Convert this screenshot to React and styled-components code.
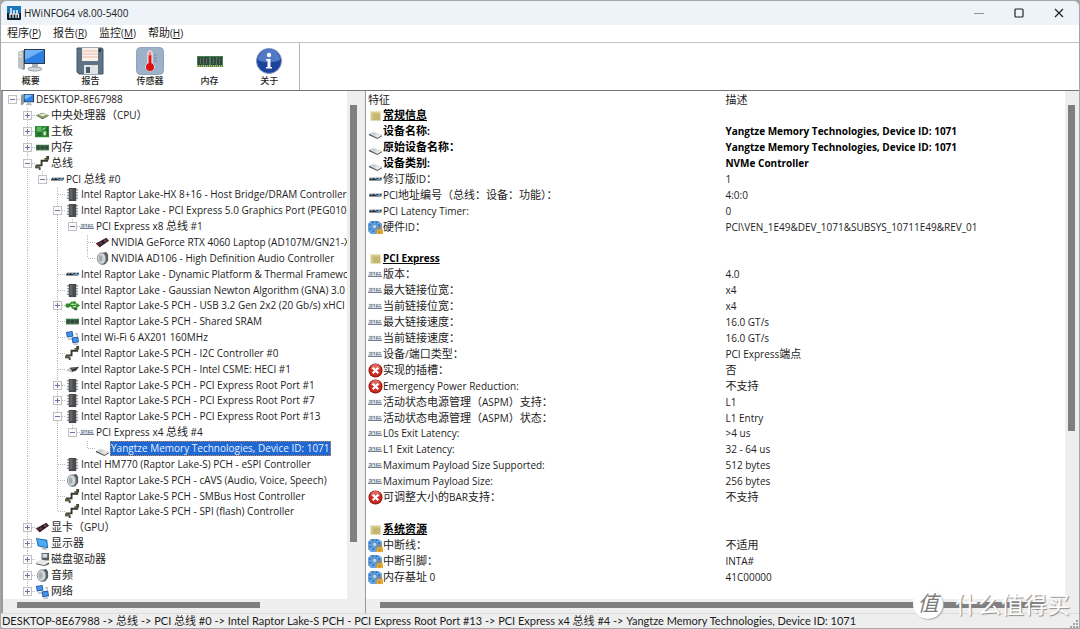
import React, { useState } from "react";
import styled, { createGlobalStyle } from "styled-components";

const GlobalStyle = createGlobalStyle`
  * {
    box-sizing: border-box;
  }
  body {
    margin: 0;
    background-color: #a8a8a8;
  }
  body, button {
    font-family: "Open Sans", "Noto Sans CJK SC", sans-serif;
    font-size: 10px;
    color: #1c1c1c;
  }
  button {
    border: none;
    background: none;
    padding: 0;
  }
`;

const Window = styled.div`
  height: 100vh;
  display: flex;
  flex-direction: column;
  position: relative;
  overflow: hidden;
  background-color: #eeeeee;
  border: 1px solid #a3a7aa;
  border-radius: 7px 7px 3px 3px;
`;

const TitleBar = styled.header`
  display: flex;
  align-items: center;
  flex: 0 0 24px;
  padding-left: 6px;
  background-color: #edf3f9;
`;
const Title = styled.h1`
  flex: 1;
  margin: 0 0 0 3px;
  font-size: 10px;
  font-weight: 400;
`;
const WindowButton = styled.button`
  width: 40px;
  height: 24px;
  display: flex;
  align-items: center;
  justify-content: center;
`;

const MenuBar = styled.nav`
  display: flex;
  align-items: center;
  flex: 0 0 18px;
  gap: 12px;
  padding-left: 6px;
  background-color: #fff;
  border-bottom: 1px solid #c2c2c2;
  button {
    line-height: 15px;
  }
`;

const ToolBar = styled.div`
  display: flex;
  flex: 0 0 48px;
  background-color: #fff;
  border-bottom: 1px solid #767676;
`;
const ToolGroup = styled.div`
  display: flex;
  width: 299px;
  border-right: 1px solid #b4b4b4;
`;
const ToolButton = styled.button`
  flex: 1;
  display: flex;
  flex-direction: column;
  align-items: center;
  justify-content: space-between;
  padding: 4px 0 3px;
  font-size: 9px;
  font-weight: 500;
  line-height: 12px;
`;

const Main = styled.main`
  flex: 1;
  min-height: 0;
  display: flex;
  gap: 4px;
`;
const Pane = styled.section`
  display: grid;
  grid-template-columns: minmax(0, 1fr) 14px;
  grid-template-rows: minmax(0, 1fr) 14px;
  min-width: 0;
  flex: ${(props) => (props.$grow ? "1 1 0" : "0 1 360px")};
  border-left: ${(props) => (props.$grow ? "1px" : "2px")} solid #9a9a9a;
`;
const VerticalTrack = styled.div`
  padding: 14px 4px 14px 3px;
`;
const HorizontalTrack = styled.div`
  padding: 3px 14px 5px;
`;
const Thumb = styled.div`
  width: ${(props) => props.$width || "100%"};
  height: ${(props) => props.$height || "100%"};
  background-color: #7f7f7f;
`;

const Hanzi = styled.span`
  font-size: 11px;
  line-height: 11px;
`;

const TreeList = styled.ul`
  display: grid;
  grid-auto-rows: minmax(15px, 1fr);
  margin: 0;
  padding: 1px 0 0 2px;
  overflow: hidden;
  list-style: none;
  background-color: #fff;
`;
const TreeItem = styled.li`
  display: flex;
  align-items: stretch;
  min-width: 0;
  white-space: nowrap;
`;
const dots = "#b9b9b9 0 1px, transparent 1px 2px";
const Guide = styled.span`
  flex: 0 0 15px;
  display: flex;
  align-items: center;
  justify-content: center;
  background-repeat: no-repeat;
  background-image:
    repeating-linear-gradient(to bottom, ${dots}),
    repeating-linear-gradient(to right, ${dots});
  background-position: 7px 0, 8px 50%;
  background-size:
    ${(props) => ({ none: "0 0", last: "1px 50%" }[props.$line] || "1px 100%")},
    ${(props) => (props.$arm ? "7px 1px" : "0 0")};
`;
const Toggle = styled.button`
  width: 9px;
  height: 9px;
  display: flex;
  background-color: #fff;
`;
const TreeIcon = styled.span`
  flex: 0 0 15px;
  display: flex;
  align-items: center;
`;
const TreeLabel = styled.span`
  align-self: center;
  margin-left: ${(props) => (props.$selected ? "0" : "1px")};
  padding: ${(props) => (props.$selected ? "0 1px" : "0")};
  line-height: 15px;
  color: ${(props) => (props.$selected ? "#e4efff" : "inherit")};
  background-color: ${(props) => (props.$selected ? "#1f67d2" : "transparent")};
  outline: ${(props) => (props.$selected ? "1px dotted #c98a4a" : "none")};
  outline-offset: -1px;
`;

const DetailArea = styled.div`
  display: grid;
  padding: 1px 0 14px;
  background-color: #fff;
  overflow: hidden;
`;
const DetailTable = styled.table`
  display: grid;
  grid-auto-rows: minmax(15px, 1fr);
  thead, tbody {
    display: contents;
  }
`;
const DetailRow = styled.tr`
  display: grid;
  grid-template-columns: 51% 49%;
  align-items: center;
  padding-left: 2px;
  line-height: 15px;
  white-space: nowrap;
  font-weight: ${(props) => (props.$bold ? 700 : 400)};
  color: ${(props) => (props.$bold ? "#000" : "inherit")};
  th, td {
    display: flex;
    align-items: center;
    padding: 0;
    font-weight: inherit;
    text-align: left;
  }
  th + th, td + td {
    padding-left: 2px;
  }
`;
const DetailName = styled.span`
  text-decoration: ${(props) => (props.$section ? "underline" : "none")};
`;

const StatusBar = styled.footer`
  display: flex;
  justify-content: space-between;
  align-items: flex-end;
  flex: 0 0 15px;
  padding: 0 1px;
  font-family: Lato, "Noto Sans CJK SC", sans-serif;
  font-size: 11px;
  line-height: 14px;
  white-space: nowrap;
  border-top: 1px solid #dcdcdc;
`;

const Watermark = styled.div`
  position: absolute;
  right: 9px;
  bottom: 9px;
  display: flex;
  align-items: center;
  gap: 12px;
  font-size: 23px;
  line-height: 30px;
  color: #fff;
  text-shadow: 1px 1px 1px #8c8c8c;
  pointer-events: none;
`;
const WatermarkBadge = styled.span`
  width: 30px;
  height: 30px;
  border-radius: 50%;
  background-color: #fff;
  box-shadow: 1px 1px 1px #b0b0b0;
  color: #7c7c7c;
  text-shadow: none;
  font-size: 21px;
  font-style: italic;
  line-height: 28px;
  text-align: center;
`;

// Chinese runs are set one size above the Latin text around them.
const Text = ({ children }) =>
  children
    .split(/([\u2e80-\u9fff\uff00-\uffef]+)/)
    .map((part, i) => (i % 2 ? <Hanzi key={i}>{part}</Hanzi> : part));

const Svg = ({ children, size = 15, box = 16 }) => (
  <svg width={size} height={size} viewBox={`0 0 ${box} ${box}`} aria-hidden="true">
    {children}
  </svg>
);

const icons = {
  computer: (
    <>
      <path d="M1 3l3-1v11l-3 1z" fill="#8f989e" />
      <path d="M4 2h11v9H4z" fill="#22364e" />
      <path d="M5 3h9v7H5z" fill="#2f86e6" />
      <path d="M5 3h9L5 8z" fill="#7fc0fa" />
      <path d="M8 11h3l2 3H6z" fill="#b5bcc2" />
    </>
  ),
  cpu: (
    <>
      <path d="M1 8l7-3 7 3-7 4z" fill="#4b5a31" />
      <path d="M1 8l7-3 7 3-7 3z" fill="#8a9a62" />
      <path d="M4 7l5-1.500 4 1.500-5 2z" fill="#dfe3cf" />
    </>
  ),
  board: (
    <>
      <path d="M0 2h15v12H0z" fill="#2c8a37" />
      <path d="M2 3h5v5H2z" fill="#63b45e" />
      <path d="M9 8h3v4H9z" fill="#d3e2b0" />
      <path d="M13 3v10M2 10h5M2 12h5" stroke="#155c24" />
      <path d="M8 6l3-2" stroke="#e0f0d0" />
    </>
  ),
  ram: (
    <>
      <path d="M1 5h14v6H1z" fill="#3d7d49" />
      <path d="M2 6h3v4H2zM6 6h4v4H6zM11 6h3v4h-3z" fill="#34483f" />
      <path d="M1 11h14" stroke="#8fa070" strokeDasharray="1 1" />
    </>
  ),
  bus: (
    <>
      <path d="M2 13v-3h5V5h6V2" fill="none" stroke="#33372a" strokeWidth="2" />
      <path d="M0 10h5v3H0zM10 4h5V2h-5z" fill="#5a5f45" />
      <path d="M4 12h2v3H4zM12 0h3v3h-3z" fill="#43462f" />
    </>
  ),
  pci: (
    <>
      <path d="M2 6h13l-1 3H1z" fill="#27313a" />
      <path d="M3 7h2M7 7h2M11 7h2" stroke="#9fb4c4" />
      <path d="M9 8h5" stroke="#4ba2d6" />
    </>
  ),
  pcie: (
    <>
      <path d="M1 5h12l2 5H0z" fill="#dde1e7" />
      <path d="M1 6h3v2H2v1M5 6h2v2M9 9V6h2M12 6h2" fill="none" stroke="#7d8795" />
      <path d="M0 10h15" stroke="#5b6675" />
      <path d="M9 8h5" stroke="#6e90c4" />
    </>
  ),
  chip: (
    <>
      <path d="M2 3h12M2 6h12M2 9h12M2 12h12" stroke="#a2a2a2" strokeWidth="1.500" />
      <path d="M4 1h8v14H4z" fill="#484b4e" />
      <path d="M5 2h3v11H5z" fill="#63676b" />
    </>
  ),
  gpu: (
    <>
      <path d="M1 9l11-6 3 3-10 7z" fill="#2a2226" />
      <path d="M1 9l2-1 3 4-1 1z" fill="#611e2a" />
      <circle cx="11" cy="6" r="1.500" fill="#8f3647" />
      <circle cx="6" cy="9" r="1.300" fill="#644048" />
    </>
  ),
  audio: (
    <>
      <path d="M7 2l5-1 2 3v6l-3 4-4 1z" fill="#565e62" />
      <ellipse cx="7" cy="8" rx="4.500" ry="6" fill="#d2d7da" stroke="#899398" />
      <ellipse cx="6" cy="8" rx="2" ry="3.500" fill="#a3abaf" />
    </>
  ),
  usb: (
    <>
      <path d="M2 8h11M4 8l3-3h3M6 8l3 3h3" fill="none" stroke="#2c8a24" strokeWidth="1.800" />
      <circle cx="3" cy="8" r="2.500" fill="#2c8a24" />
      <path d="M12 5l4 3-4 3z" fill="#2c8a24" />
      <circle cx="10" cy="5" r="1.800" fill="#3f9c35" />
      <path d="M10 10h3v3h-3z" fill="#1f6e1a" />
    </>
  ),
  network: (
    <>
      <path d="M1 2l7-1 1 6-7 1z" fill="#2457a4" />
      <path d="M2 3l5-1 1 4-5 1z" fill="#3f95ea" />
      <path d="M3 9h4l1 1H3z" fill="#8b97a5" />
      <path d="M7 8l7-1 1 6-7 1z" fill="#2457a4" />
      <path d="M8 9l5-1 1 4-5 1z" fill="#3f95ea" />
      <path d="M9 15h5M11 4h2v2" fill="none" stroke="#8b97a5" />
    </>
  ),
  csme: (
    <>
      <path d="M5 6l10-1-3 4-5 2z" fill="#33383c" />
      <path d="M1 9l4-3 3 4-2 1z" fill="#c3c7ca" />
      <path d="M7 7l5-1" stroke="#7a8186" />
    </>
  ),
  drive: (
    <>
      <path d="M1 11l5-2 9 3v1l-5 3-9-4z" fill="#55595c" />
      <path d="M1 10l5-2 9 4-5 3z" fill="#e3e5e6" />
      <path d="M3 10l3-1 4 2-3 1z" fill="#c9ccce" />
    </>
  ),
  monitor: (
    <>
      <path d="M1 2l12 2 1 9-11-2z" fill="#1c5e9e" />
      <path d="M2 3l10 2 1 7-9-2z" fill="#49acf4" />
      <path d="M6 12l6 1 1 2-5-1z" fill="#aab2b8" />
    </>
  ),
  disks: (
    <>
      <path d="M7 1h8v8H7z" fill="#576069" />
      <path d="M8 2h5v4H8z" fill="#d7dde1" />
      <path d="M1 10l6-2 8 3-5 3-9-2z" fill="#e6e8e9" />
      <path d="M1 12l9 2 5-3v2l-5 2-9-2z" fill="#4c5155" />
    </>
  ),
  section: (
    <>
      <path d="M2 3h12v11H2z" fill="#f1eeda" />
      <path d="M3 4h10v9H3z" fill="#d6ca8c" />
      <path d="M5 6h8v7H5z" fill="#c4b774" />
    </>
  ),
  resource: (
    <>
      <path d="M0 4l3-3h8l4 3v8l-3 3H3l-3-3z" fill="#67a3de" />
      <circle cx="7" cy="7" r="5" fill="none" stroke="#3573b4" strokeDasharray="2 2" strokeWidth="2" />
      <circle cx="7" cy="7" r="2.500" fill="#b4d4f2" stroke="#4a85c4" />
      <path d="M10 10V8h4v2" fill="none" stroke="#b98430" />
      <path d="M9 10h7v5H9z" fill="#eaa832" />
      <path d="M12 12v2" stroke="#a8721c" />
    </>
  ),
  error: (
    <>
      <circle cx="8" cy="8" r="7.500" fill="#8e1411" />
      <circle cx="8" cy="8" r="6.500" fill="#ce2b22" />
      <path d="M3 6a5 5 0 0 1 10 0c-3 2-7 2-10 0z" fill="#e0695f" />
      <path d="M5 5l6 6M11 5l-6 6" stroke="#fff" strokeWidth="2.400" />
    </>
  ),
};

const Icon = ({ name }) => <Svg>{icons[name]}</Svg>;

const LogoIcon = () => (
  <Svg size={14} box={14}>
    <rect width="14" height="14" rx="1" fill="#0b1e30" />
    <path d="M0 0h14v7H0z" fill="#1a76b8" />
    <path d="M4 2v6M7 4v4M10 4v4" stroke="#e6f4ff" strokeWidth="1.600" />
    <path d="M2 8h10M3 8v4M6 8v4M9 8v4M11.500 8v4" stroke="#fff" strokeWidth="1.200" />
  </Svg>
);

const toolIcons = {
  summary: (
    <>
      <path d="M1 5l5-2v20l-5-2z" fill="#bfc4c8" />
      <path d="M6 3l2 1v18l-2 1z" fill="#858d93" />
      <path d="M2 7l3-1M2 10l3-1" stroke="#eef1f3" />
      <path d="M7 2h21v15H7z" fill="#2a3a4d" />
      <path d="M8 3h19v13H8z" fill="#2b7fe0" />
      <path d="M8 3h19L8 13z" fill="#6fb2f6" />
      <path d="M15 17h6v4h-6z" fill="#aab1b6" />
      <ellipse cx="18" cy="22" rx="7" ry="2" fill="#d4d8db" stroke="#9aa0a5" />
    </>
  ),
  report: (
    <>
      <path d="M1 1h25l1 1v25H3l-2-2z" fill="#5f7387" stroke="#43566a" />
      <path d="M6 1h16v13H6z" fill="#fdf0ea" />
      <path d="M6 4h16M6 7h16M6 10h16" stroke="#e7b9a6" />
      <path d="M8 18h14v9H8z" fill="#dfe3e6" />
      <path d="M10 20h4v6h-4z" fill="#4a5a6b" />
      <path d="M24 2v3" stroke="#2c3a48" strokeWidth="2" />
    </>
  ),
  sensors: (
    <>
      <rect x="0.500" y="0.500" width="27" height="27" rx="4" fill="#9db2c9" stroke="#8fa4bc" />
      <path d="M11.500 6a2.500 2.500 0 0 1 5 0v10a4.500 4.500 0 1 1-5 0z" fill="#fff" />
      <path d="M14 8v12" stroke="#e31212" strokeWidth="3" />
      <path d="M14 4.500v4" stroke="#e88" strokeWidth="3" />
      <circle cx="14" cy="20" r="4" fill="#dd1010" />
      <path d="M18 8h3M18 11h3M18 14h3" stroke="#7086a0" />
    </>
  ),
  memory: (
    <>
      <path d="M1 9h26v11H1z" fill="#3f8250" />
      <path d="M2 10h5v8H2zM8 10h5v8H8zM15 10h5v8h-5zM21 10h5v8h-5z" fill="#34463e" />
      <path d="M4 11h1v6H4zM10 11h1v6h-1zM17 11h1v6h-1zM23 11h1v6h-1z" fill="#5a6b64" />
      <path d="M1 19h26" stroke="#b9b870" strokeWidth="2" strokeDasharray="1 1" />
    </>
  ),
  about: (
    <>
      <circle cx="14" cy="14" r="12.500" fill="#1b459c" stroke="#8096c4" />
      <path d="M3 13a11 11 0 0 1 22 0c-6 3-16 3-22 0z" fill="#5179c4" />
      <circle cx="14" cy="8" r="2.200" fill="#fff" />
      <path d="M11 12h4.500v8H17v1.500h-6V20h1.500v-6.500H11z" fill="#fff" />
    </>
  ),
};

const tools = [
  ["summary", "概要"],
  ["report", "报告"],
  ["sensors", "传感器"],
  ["memory", "内存"],
  ["about", "关于"],
];

const menus = [
  ["程序", "P"],
  ["报告", "R"],
  ["监控", "M"],
  ["帮助", "H"],
];

const node = (icon, label, children, open = true) => ({ icon, label, children, open });

const tree = [
  node("computer", "DESKTOP-8E67988", [
    node("cpu", "中央处理器（CPU）", [], false),
    node("board", "主板", [], false),
    node("ram", "内存", [], false),
    node("bus", "总线", [
      node("pci", "PCI 总线 #0", [
        node("chip", "Intel Raptor Lake-HX 8+16 - Host Bridge/DRAM Controller"),
        node("chip", "Intel Raptor Lake - PCI Express 5.0 Graphics Port (PEG010)", [
          node("pcie", "PCI Express x8 总线 #1", [
            node("gpu", "NVIDIA GeForce RTX 4060 Laptop (AD107M/GN21-X"),
            node("audio", "NVIDIA AD106 - High Definition Audio Controller"),
          ]),
        ]),
        node("pci", "Intel Raptor Lake - Dynamic Platform & Thermal Framework"),
        node("chip", "Intel Raptor Lake - Gaussian Newton Algorithm (GNA) 3.0"),
        node("usb", "Intel Raptor Lake-S PCH - USB 3.2 Gen 2x2 (20 Gb/s) xHCI H", [], false),
        node("ram", "Intel Raptor Lake-S PCH - Shared SRAM"),
        node("network", "Intel Wi-Fi 6 AX201 160MHz"),
        node("bus", "Intel Raptor Lake-S PCH - I2C Controller #0"),
        node("csme", "Intel Raptor Lake-S PCH - Intel CSME: HECI #1"),
        node("chip", "Intel Raptor Lake-S PCH - PCI Express Root Port #1", [], false),
        node("chip", "Intel Raptor Lake-S PCH - PCI Express Root Port #7", [], false),
        node("chip", "Intel Raptor Lake-S PCH - PCI Express Root Port #13", [
          node("pcie", "PCI Express x4 总线 #4", [
            node("drive", "Yangtze Memory Technologies, Device ID: 1071"),
          ]),
        ]),
        node("chip", "Intel HM770 (Raptor Lake-S) PCH - eSPI Controller"),
        node("audio", "Intel Raptor Lake-S PCH - cAVS (Audio, Voice, Speech)"),
        node("bus", "Intel Raptor Lake-S PCH - SMBus Host Controller"),
        node("bus", "Intel Raptor Lake-S PCH - SPI (flash) Controller"),
      ]),
    ]),
    node("gpu", "显卡（GPU）", [], false),
    node("monitor", "显示器", [], false),
    node("disks", "磁盘驱动器", [], false),
    node("audio", "音频", [], false),
    node("network", "网络", [], false),
  ]),
];

// Turns the nested tree into visible rows, each with the guide lines left of it.
const flatten = (nodes, parents = [], isRoot = true) =>
  nodes.flatMap((item, i) => {
    const last = i === nodes.length - 1;
    const row = { ...item, parents, line: isRoot ? "none" : last ? "last" : "full" };
    const below = [...parents, isRoot || last ? "none" : "full"];
    return [row, ...(item.open && item.children ? flatten(item.children, below, false) : [])];
  });

const details = [
  ["section", "常规信息", ""],
  ["drive", "设备名称:", "Yangtze Memory Technologies, Device ID: 1071", true],
  ["drive", "原始设备名称：", "Yangtze Memory Technologies, Device ID: 1071", true],
  ["drive", "设备类别:", "NVMe Controller", true],
  ["pci", "修订版ID：", "1"],
  ["pci", "PCI地址编号（总线：设备：功能）：", "4:0:0"],
  ["pci", "PCI Latency Timer:", "0"],
  ["resource", "硬件ID：", "PCI\\VEN_1E49&DEV_1071&SUBSYS_10711E49&REV_01"],
  null,
  ["section", "PCI Express", ""],
  ["pcie", "版本：", "4.0"],
  ["pcie", "最大链接位宽：", "x4"],
  ["pcie", "当前链接位宽：", "x4"],
  ["pcie", "最大链接速度：", "16.0 GT/s"],
  ["pcie", "当前链接速度：", "16.0 GT/s"],
  ["pcie", "设备/端口类型：", "PCI Express端点"],
  ["error", "实现的插槽：", "否"],
  ["error", "Emergency Power Reduction:", "不支持"],
  ["pcie", "活动状态电源管理（ASPM）支持：", "L1"],
  ["pcie", "活动状态电源管理（ASPM）状态：", "L1 Entry"],
  ["pcie", "L0s Exit Latency:", ">4 us"],
  ["pcie", "L1 Exit Latency:", "32 - 64 us"],
  ["pcie", "Maximum Payload Size Supported:", "512 bytes"],
  ["pcie", "Maximum Payload Size:", "256 bytes"],
  ["error", "可调整大小的BAR支持：", "不支持"],
  null,
  ["section", "系统资源", ""],
  ["resource", "中断线：", "不适用"],
  ["resource", "中断引脚：", "INTA#"],
  ["resource", "内存基址 0", "41C00000"],
];

const Tree = () => {
  const [selected, setSelected] = useState("Yangtze Memory Technologies, Device ID: 1071");
  return (
    <TreeList role="tree">
      {flatten(tree).map((row) => (
        <TreeItem
          key={row.label}
          role="treeitem"
          aria-level={row.parents.length + 1}
          aria-selected={row.label === selected}
          onClick={() => setSelected(row.label)}
        >
          {row.parents.map((line, i) => (
            <Guide key={i} $line={line} />
          ))}
          <Guide $line={row.line} $arm>
            {row.children && (
              <Toggle aria-label={row.open ? "折叠" : "展开"}>
                <Svg size={9} box={9}>
                  <rect x="0.500" y="0.500" width="8" height="8" fill="#fafafa" stroke="#c2c2c2" />
                  <path d={row.open ? "M2 4.500h5" : "M2 4.500h5M4.500 2v5"} stroke="#6b76a0" />
                </Svg>
              </Toggle>
            )}
          </Guide>
          <TreeIcon>
            <Icon name={row.icon} />
          </TreeIcon>
          <TreeLabel $selected={row.label === selected}>
            <Text>{row.label}</Text>
          </TreeLabel>
        </TreeItem>
      ))}
    </TreeList>
  );
};

const Details = () => (
  <DetailArea>
    <DetailTable>
      <thead>
        <DetailRow>
          <th scope="col">
            <Text>特征</Text>
          </th>
          <th scope="col">
            <Text>描述</Text>
          </th>
        </DetailRow>
      </thead>
      <tbody>
        {details.map((item, i) =>
          item ? (
            <DetailRow key={i} $bold={item[3] || item[0] === "section"}>
              <td>
                <Icon name={item[0]} />
                <DetailName $section={item[0] === "section"}>
                  <Text>{item[1]}</Text>
                </DetailName>
              </td>
              <td>
                <span>
                  <Text>{item[2]}</Text>
                </span>
              </td>
            </DetailRow>
          ) : (
            <DetailRow key={i}>
              <td colSpan="2" />
            </DetailRow>
          )
        )}
      </tbody>
    </DetailTable>
  </DetailArea>
);

const App = () => {
  return (
    <Window lang="zh-CN">
      <GlobalStyle />
      <TitleBar>
        <LogoIcon />
        <Title>HWiNFO64 v8.00-5400</Title>
        <WindowButton aria-label="最小化">
          <Svg size={10} box={10}>
            <path d="M0 5.500h10" stroke="#909498" />
          </Svg>
        </WindowButton>
        <WindowButton aria-label="最大化">
          <Svg size={10} box={10}>
            <rect x="1" y="1" width="8" height="8" rx="1" fill="none" stroke="#222" strokeWidth="1.200" />
          </Svg>
        </WindowButton>
        <WindowButton aria-label="关闭">
          <Svg size={10} box={10}>
            <path d="M1 1l8 8M9 1L1 9" stroke="#222" strokeWidth="1.200" />
          </Svg>
        </WindowButton>
      </TitleBar>
      <MenuBar>
        {menus.map(([name, key]) => (
          <button key={key}>
            <Text>{name}</Text>(<u>{key}</u>)
          </button>
        ))}
      </MenuBar>
      <ToolBar>
        <ToolGroup>
          {tools.map(([icon, label]) => (
            <ToolButton key={icon}>
              <Svg size={28} box={28}>
                {toolIcons[icon]}
              </Svg>
              {label}
            </ToolButton>
          ))}
        </ToolGroup>
      </ToolBar>
      <Main>
        <Pane>
          <Tree />
          <VerticalTrack>
            <Thumb $height="91%" />
          </VerticalTrack>
          <HorizontalTrack>
            <Thumb $width="77%" />
          </HorizontalTrack>
        </Pane>
        <Pane $grow>
          <Details />
          <VerticalTrack>
            <Thumb $height="68%" />
          </VerticalTrack>
          <HorizontalTrack>
            <Thumb $width="99%" />
          </HorizontalTrack>
        </Pane>
      </Main>
      <StatusBar>
        {
          "DESKTOP-8E67988 -> 总线 -> PCI 总线 #0 -> Intel Raptor Lake-S PCH - PCI Express Root Port #13 -> PCI Express x4 总线 #4 -> Yangtze Memory Technologies, Device ID: 1071"
        }
        <Svg size={8} box={8}>
          <path d="M6 0h2v2H6zM3 3h2v2H3zM6 3h2v2H6zM0 6h2v2H0zM3 6h2v2H3zM6 6h2v2H6z" fill="#a5a5a5" />
        </Svg>
      </StatusBar>
      <Watermark>
        <WatermarkBadge>值</WatermarkBadge>
        什么值得买
      </Watermark>
    </Window>
  );
};

export default App;
